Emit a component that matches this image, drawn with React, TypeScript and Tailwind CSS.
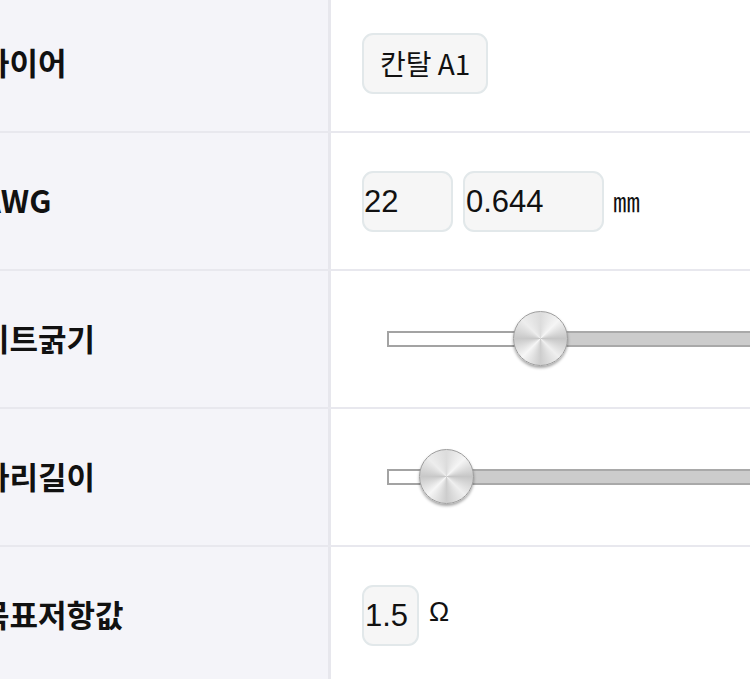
import React from "react";

const labelFont = { fontFamily: '"Noto Sans CJK KR", "Noto Sans", sans-serif' };

function Row({ label, children }: { label: string; children: React.ReactNode }) {
  return (
    <div className="flex h-[138px] border-b-2 border-[#e8e8ee]">
      <div className="w-[331px] shrink-0 bg-[#f4f4f9] border-r-[3px] border-[#e7e7ed] flex items-center overflow-hidden">
        <span
          className="-ml-[19px] -mt-[3px] whitespace-nowrap text-[31px] font-bold text-[#111] leading-none"
          style={labelFont}
        >
          {label}
        </span>
      </div>
      <div className="flex-1 flex items-center pl-[31px] bg-white min-w-0">{children}</div>
    </div>
  );
}

function Box({ children, className = "" }: { children: React.ReactNode; className?: string }) {
  return (
    <div
      className={`h-[61px] rounded-[11px] border-2 border-[#e2e8ea] bg-[#f6f6f6] flex items-center text-[#111] ${className}`}
    >
      {children}
    </div>
  );
}

function Slider({ pos }: { pos: number }) {
  return (
    <div className="relative ml-[25px] w-[500px] shrink-0 h-[60px] flex items-center">
      <div className="flex w-full h-[16px]">
        <div className="h-full bg-white border-2 border-[#a3a3a3] border-r-0" style={{ width: pos }} />
        <div className="h-full flex-1 bg-[#cccccc] border-2 border-[#a9a9a9] border-l-0" />
      </div>
      <div
        className="absolute top-[2px] w-[55px] h-[55px] rounded-full border border-[#9d9d9d] bg-[conic-gradient(#dcdcdc,#f5f5f5,#c6c6c6,#efefef,#cdcdcd,#f6f6f6,#c8c8c8,#ededed,#dcdcdc)] shadow-[0_2px_3px_rgba(0,0,0,0.35)]"
        style={{ left: pos - 27 }}
      />
    </div>
  );
}

export default function App() {
  const num = { fontFamily: '"Liberation Sans", Arial, sans-serif' };
  return (
    <div className="w-[750px] h-[679px] overflow-hidden bg-white">
      <div className="-mt-[5px] flex flex-col">
        <Row label="와이어">
          <Box className="px-[16px]">
            <span className="text-[28px] leading-none" style={labelFont}>
              칸탈 A1
            </span>
          </Box>
        </Row>
        <Row label="AWG">
          <Box className="w-[91px] pl-[0px]">
            <span className="text-[31px] leading-none" style={num}>22</span>
          </Box>
          <Box className="w-[141px] ml-[10px] pl-[1px]">
            <span className="text-[31px] leading-none" style={num}>0.644</span>
          </Box>
          <span className="ml-[9px] text-[27px] leading-none text-[#111] -mt-[2px]" style={labelFont}>
            ㎜
          </span>
        </Row>
        <Row label="비트굵기">
          <Slider pos={153} />
        </Row>
        <Row label="다리길이">
          <Slider pos={59} />
        </Row>
        <Row label="목표저항값">
          <Box className="w-[57px] pl-[1px]">
            <span className="text-[31px] leading-none" style={num}>1.5</span>
          </Box>
          <span className="ml-[10px] -mt-[6px] text-[27px] leading-none text-[#111]" style={num}>
            Ω
          </span>
        </Row>
      </div>
    </div>
  );
}
